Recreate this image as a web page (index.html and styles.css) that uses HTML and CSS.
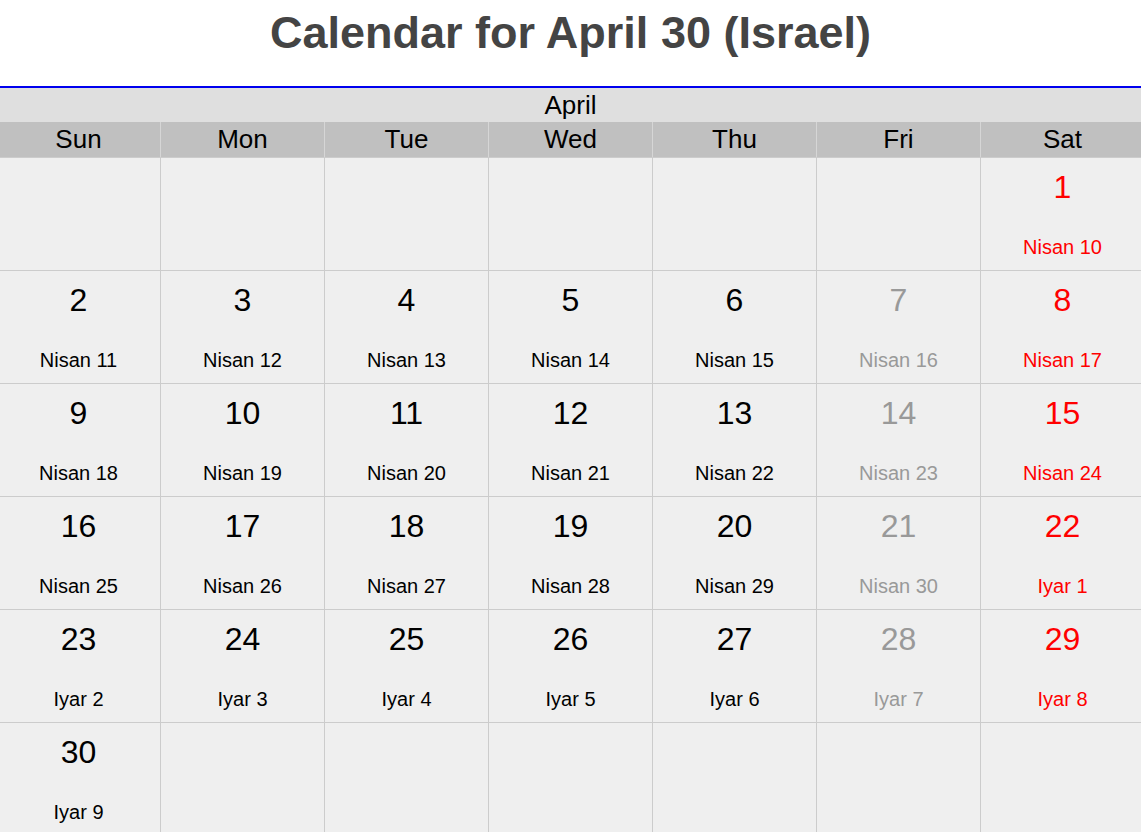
FILE: index.html
```html
<!DOCTYPE html>
<html>
<head>
<meta charset="utf-8">
<title>Calendar for April 30 (Israel)</title>
<link rel="stylesheet" href="styles.css">
</head>
<body>
<h1 class="title">Calendar for April 30 (Israel)</h1>
<div class="calendar">
  <div class="month">April</div>
  <div class="weekdays">
    <div class="wd">Sun</div><div class="wd">Mon</div><div class="wd">Tue</div><div class="wd">Wed</div><div class="wd">Thu</div><div class="wd">Fri</div><div class="wd">Sat</div>
  </div>
  <div class="days">
    <div class="cell"></div><div class="cell"></div><div class="cell"></div><div class="cell"></div><div class="cell"></div><div class="cell"></div>
    <div class="cell sat"><div class="num">1</div><div class="heb">Nisan 10</div></div>

    <div class="cell"><div class="num">2</div><div class="heb">Nisan 11</div></div>
    <div class="cell"><div class="num">3</div><div class="heb">Nisan 12</div></div>
    <div class="cell"><div class="num">4</div><div class="heb">Nisan 13</div></div>
    <div class="cell"><div class="num">5</div><div class="heb">Nisan 14</div></div>
    <div class="cell"><div class="num">6</div><div class="heb">Nisan 15</div></div>
    <div class="cell fri"><div class="num">7</div><div class="heb">Nisan 16</div></div>
    <div class="cell sat"><div class="num">8</div><div class="heb">Nisan 17</div></div>

    <div class="cell"><div class="num">9</div><div class="heb">Nisan 18</div></div>
    <div class="cell"><div class="num">10</div><div class="heb">Nisan 19</div></div>
    <div class="cell"><div class="num">11</div><div class="heb">Nisan 20</div></div>
    <div class="cell"><div class="num">12</div><div class="heb">Nisan 21</div></div>
    <div class="cell"><div class="num">13</div><div class="heb">Nisan 22</div></div>
    <div class="cell fri"><div class="num">14</div><div class="heb">Nisan 23</div></div>
    <div class="cell sat"><div class="num">15</div><div class="heb">Nisan 24</div></div>

    <div class="cell"><div class="num">16</div><div class="heb">Nisan 25</div></div>
    <div class="cell"><div class="num">17</div><div class="heb">Nisan 26</div></div>
    <div class="cell"><div class="num">18</div><div class="heb">Nisan 27</div></div>
    <div class="cell"><div class="num">19</div><div class="heb">Nisan 28</div></div>
    <div class="cell"><div class="num">20</div><div class="heb">Nisan 29</div></div>
    <div class="cell fri"><div class="num">21</div><div class="heb">Nisan 30</div></div>
    <div class="cell sat"><div class="num">22</div><div class="heb">Iyar 1</div></div>

    <div class="cell"><div class="num">23</div><div class="heb">Iyar 2</div></div>
    <div class="cell"><div class="num">24</div><div class="heb">Iyar 3</div></div>
    <div class="cell"><div class="num">25</div><div class="heb">Iyar 4</div></div>
    <div class="cell"><div class="num">26</div><div class="heb">Iyar 5</div></div>
    <div class="cell"><div class="num">27</div><div class="heb">Iyar 6</div></div>
    <div class="cell fri"><div class="num">28</div><div class="heb">Iyar 7</div></div>
    <div class="cell sat"><div class="num">29</div><div class="heb">Iyar 8</div></div>

    <div class="cell"><div class="num">30</div><div class="heb">Iyar 9</div></div>
    <div class="cell"></div><div class="cell"></div><div class="cell"></div><div class="cell"></div><div class="cell"></div><div class="cell"></div>
  </div>
</div>
</body>
</html>
```

FILE: styles.css
```css
html, body {
  margin: 0;
  padding: 0;
  background: #ffffff;
  overflow: hidden;
}

body {
  font-family: "Liberation Sans", Arial, sans-serif;
  color: #000;
}

.title {
  margin: 0;
  height: 86px;
  line-height: 66px;
  font-size: 45px;
  font-weight: bold;
  color: #444444;
  text-align: center;
}

.calendar {
  border-top: 2px solid #0000ee;
}

.month {
  height: 34px;
  line-height: 34px;
  background: #dfdfdf;
  text-align: center;
  font-size: 26px;
}

.weekdays {
  display: grid;
  grid-template-columns: repeat(7, 163px);
  column-gap: 1px;
  margin-left: -3px;
  width: 1147px;
  background: #d6d6d6;
  height: 35px;
}

.wd {
  background: #c0c0c0;
  text-align: center;
  font-size: 26px;
  line-height: 35px;
}

.days {
  display: grid;
  grid-template-columns: repeat(7, 163px);
  grid-auto-rows: 112px;
  gap: 1px;
  margin-left: -3px;
  width: 1147px;
  background: #cccccc;
  padding-top: 1px;
}

.cell {
  background: #efefef;
  text-align: center;
}

.num {
  margin-top: 9px;
  font-size: 32px;
  line-height: 40px;
}

.heb {
  margin-top: 28px;
  font-size: 20px;
  line-height: 24px;
}

.fri {
  color: #999999;
}

.sat {
  color: #ff0000;
}
```
